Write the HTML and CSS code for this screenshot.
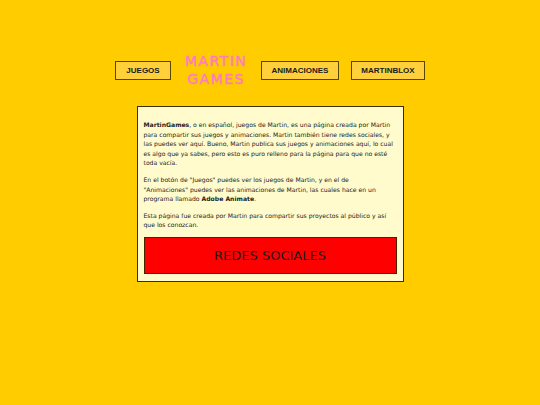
FILE: index.html
```html
<!DOCTYPE html>
<html lang="es">
<head>
<meta charset="utf-8">
<title>MartinGames</title>
<link rel="stylesheet" href="styles.css">
</head>
<body>
<div class="page">
  <header class="nav">
    <a class="nav-btn btn-juegos" href="#">JUEGOS</a>
    <div class="title">MARTIN<br>GAMES</div>
    <a class="nav-btn btn-anim" href="#">ANIMACIONES</a>
    <a class="nav-btn btn-blox" href="#">MARTINBLOX</a>
  </header>
  <main class="card">
    <p><b>MartinGames</b>, o en español, juegos de Martin, es una página creada por Martin para compartir sus juegos y animaciones. Martin también tiene redes sociales, y las puedes ver aquí. Bueno, Martin publica sus juegos y animaciones aquí, lo cual es algo que ya sabes, pero esto es puro relleno para la página para que no esté toda vacía.</p>
    <p>En el botón de "Juegos" puedes ver los juegos de Martin, y en el de<br>"Animaciones" puedes ver las animaciones de Martin, las cuales hace en un programa llamado <b>Adobe Animate</b>.</p>
    <p>Esta página fue creada por Martin para compartir sus proyectos al público y así que los conozcan.</p>
    <a class="social" href="#">REDES SOCIALES</a>
  </main>
</div>
</body>
</html>
```
FILE: styles.css
```css
html, body {
  margin: 0;
  padding: 0;
  background: #ffcc00;
}
.page {
  display: flex;
  flex-direction: column;
  align-items: center;
  padding-top: 52px;
}
.nav {
  display: flex;
  align-items: center;
  gap: 12px;
  height: 36px;
}
.nav-btn {
  display: flex;
  align-items: center;
  justify-content: center;
  box-sizing: border-box;
  height: 19px;
  border: 1px solid #5a4500;
  background: #ffd03a;
  color: #1a1a1a;
  font-family: "Liberation Sans", Arial, sans-serif;
  font-weight: bold;
  font-size: 8px;
  text-decoration: none;
}
.btn-juegos { width: 56px; }
.btn-anim { width: 78px; }
.btn-blox { width: 74px; }
.title {
  width: 66px;
  text-align: center;
  color: #ff7cc0;
  font-family: "DejaVu Sans", sans-serif;
  font-size: 14px;
  letter-spacing: 1.5px;
  line-height: 18px;
  -webkit-text-stroke: 0.5px #ff7cc0;
  white-space: nowrap;
}
.card {
  margin-top: 18px;
  box-sizing: border-box;
  width: 267px;
  border: 1px solid #3a3000;
  background: #fffbcc;
  padding: 6px 6px 7px 6px;
  font-family: "DejaVu Sans", sans-serif;
  font-size: 6.1px;
  line-height: 9.6px;
  color: #222;
}
.card p {
  margin: 7px 0;
}
.card p:first-child {
  margin-top: 7px;
}
.card b {
  font-weight: bold;
}
.social {
  display: flex;
  align-items: center;
  justify-content: center;
  box-sizing: border-box;
  height: 37px;
  margin-top: 5px;
  background: #ff0000;
  border: 1px solid #4a2000;
  color: #1a1a1a;
  font-family: "DejaVu Sans", sans-serif;
  font-size: 13px;
  text-decoration: none;
}
```
